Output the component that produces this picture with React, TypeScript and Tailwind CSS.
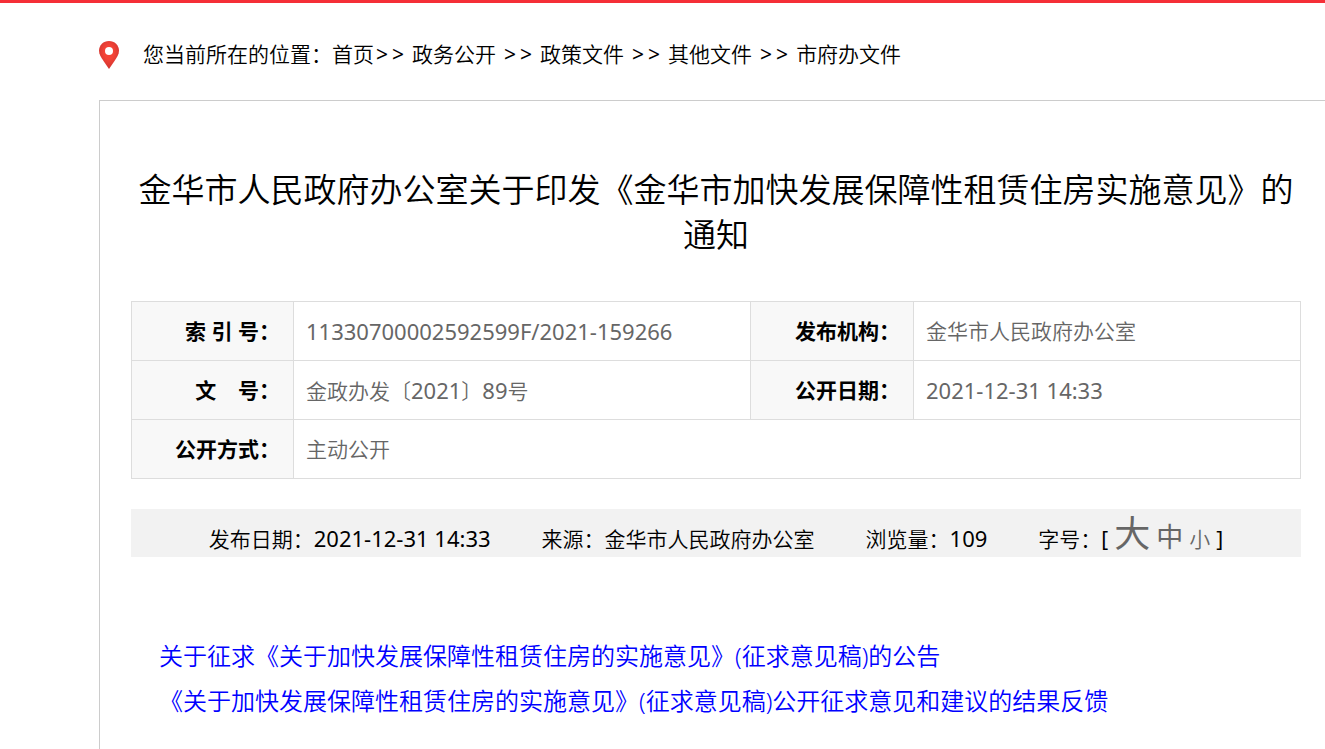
const crumbs = ['政务公开', '政策文件', '其他文件', '市府办文件'];

function Pin() {
  return (
    <svg viewBox="0 0 20 28" className="h-7 w-5 shrink-0" aria-hidden="true">
      <defs>
        <radialGradient id="pin" cx="0.5" cy="0.4" r="0.6">
          <stop offset="0.4" stopColor="#f44336" />
          <stop offset="1" stopColor="#cf3430" />
        </radialGradient>
      </defs>
      <path d="M10 0C4.400 0 0 4.200 0 9.800C0 13 2 16.200 4.500 20L10 28L15.500 20C18 16.200 20 13 20 9.800C20 4.200 15.600 0 10 0Z" fill="url(#pin)" />
      <circle cx="10" cy="10" r="4" fill="#fff" />
    </svg>
  );
}

const labelCell = 'border border-[#dddddd] bg-[#f8f8f8] pt-0.5 pr-[13px] text-right font-bold whitespace-pre text-black';
const valueCell = 'border border-[#dddddd] px-3 pt-0.5 text-left text-[#666666]';

export default function App() {
  return (
    <div className="h-screen overflow-hidden border-t-3 border-[#f52f37] bg-white font-['Noto_Sans','Noto_Sans_CJK_SC',sans-serif] text-[21px] font-[350] text-black">
      <nav aria-label="位置" className="ml-[99px] flex h-[97px] items-center pt-[7px]">
        <Pin />
        <div className="ml-6 flex whitespace-nowrap">
          <span>您当前所在的位置：</span>
          <a href="#home">首页</a>
          {crumbs.map((c, i) => (
            <span key={c} className="flex">
              <span className={i === 0 ? 'flex gap-1 pr-2 pl-0.5 font-normal' : 'flex gap-1 px-2 font-normal'}>
                <span>&gt;</span>
                <span>&gt;</span>
              </span>
              <a href="#crumb">{c}</a>
            </span>
          ))}
        </div>
      </nav>
      <main className="ml-[99px] min-h-screen border-l border-t border-[#cccccc] pl-[31px] pr-6 pt-[66px]">
        <h1 className="text-center text-[33px] leading-[45px] font-[350]">金华市人民政府办公室关于印发《金华市加快发展保障性租赁住房实施意见》的通知</h1>
        <table className="mt-11 w-full table-fixed border-collapse">
          <colgroup>
            <col className="w-[162px]" />
            <col />
            <col className="w-[163px]" />
            <col className="w-[387px]" />
          </colgroup>
          <tbody>
            <tr className="h-[59px]">
              <th scope="row" className={labelCell}>索 引 号：</th>
              <td className={valueCell}><span className="text-[22px] leading-[30px] font-normal">11330700002592599F/2021-159266</span></td>
              <th scope="row" className={labelCell}>发布机构：</th>
              <td className={valueCell}>金华市人民政府办公室</td>
            </tr>
            <tr className="h-[59px]">
              <th scope="row" className={labelCell}>文    号：</th>
              <td className={valueCell}>金政办发〔<span className="text-[22px] leading-[30px] font-normal">2021</span>〕<span className="text-[22px] leading-[30px] font-normal">89</span>号</td>
              <th scope="row" className={labelCell}>公开日期：</th>
              <td className={valueCell}><span className="text-[22px] leading-[30px] font-normal">2021-12-31 14:33</span></td>
            </tr>
            <tr className="h-[59px]">
              <th scope="row" className={labelCell}>公开方式：</th>
              <td colSpan={3} className={valueCell}>主动公开</td>
            </tr>
          </tbody>
        </table>
        <div className="mt-[30px] flex h-12 items-baseline justify-center gap-[51px] bg-[#f2f2f2] leading-[50px]">
          <span>发布日期：<span className="text-[22px] font-normal">2021-12-31 14:33</span></span>
          <span>来源：金华市人民政府办公室</span>
          <span>浏览量：<span className="text-[22px] font-normal">109</span></span>
          <span className="flex items-baseline gap-1.5">
            <span>字号：<span className="font-normal">[</span></span>
            <button type="button" className="text-[36px] font-normal text-[#666666]">大</button>
            <button type="button" className="text-[27px] font-normal text-[#666666]">中</button>
            <button type="button" className="text-[21px] text-[#666666]">小</button>
            <span className="font-normal">]</span>
          </span>
        </div>
        <div className="ml-7 mt-[76px] flex flex-col items-start text-2xl leading-[45px] text-[#0000ff]">
          <a href="#notice">关于征求《关于加快发展保障性租赁住房的实施意见》(征求意见稿)的公告</a>
          <a href="#feedback">《关于加快发展保障性租赁住房的实施意见》(征求意见稿)公开征求意见和建议的结果反馈</a>
        </div>
      </main>
    </div>
  );
}
